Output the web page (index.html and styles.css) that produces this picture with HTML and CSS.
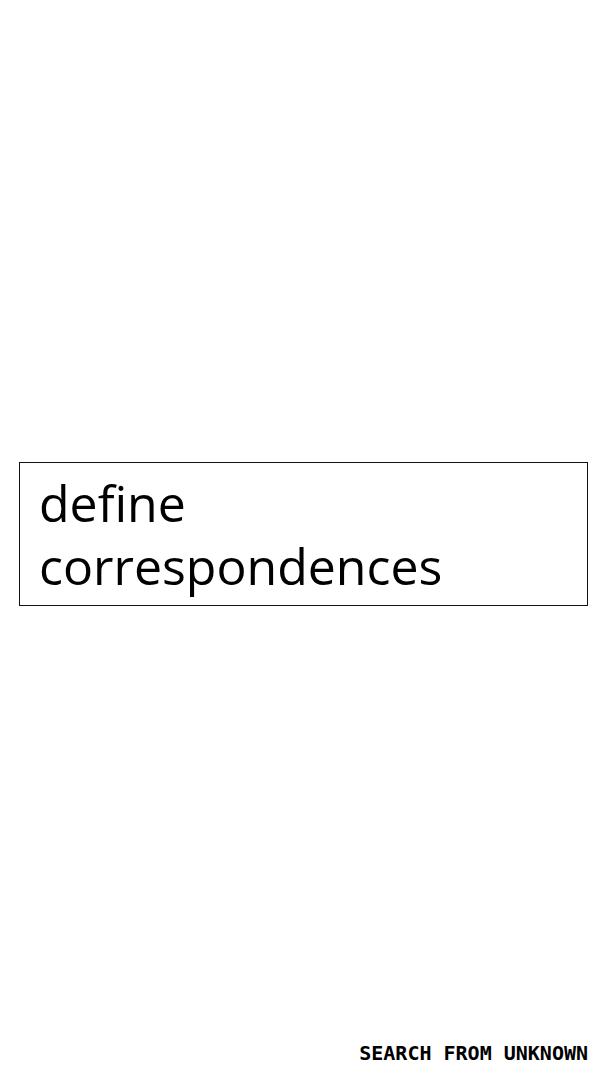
FILE: index.html
```html
<!DOCTYPE html>
<html lang="en">
<head>
    <meta charset="UTF-8">
    <title>define correspondences</title>
    <link rel="stylesheet" href="styles.css">
</head>
<body>
<div class="page">
    <div class="stage">
        <div class="card">define<br>correspondences</div>
    </div>
    <div class="footer">SEARCH FROM UNKNOWN</div>
</div>
</body>
</html>
```
FILE: styles.css
```css
* {
    padding: 0;
    margin: 0;
    box-sizing: border-box;
}

body {
    background: #ffffff;
    color: #000000;
}

.page {
    width: 608px;
    height: 1080px;
    display: flex;
    flex-direction: column;
}

.stage {
    flex: 1;
    display: flex;
    align-items: center;
    padding: 44px 20px 0 19px;
}

.card {
    width: 100%;
    border: 1px solid #111111;
    padding: 9px 19px 7px;
    font-family: "Open Sans", "Noto Sans", sans-serif;
    font-size: 50px;
    line-height: 63px;
}

.footer {
    height: 56px;
    padding: 17px 20px 0 0;
    text-align: right;
    font-family: "DejaVu Sans Mono", monospace;
    font-weight: bold;
    font-size: 20px;
}
```
